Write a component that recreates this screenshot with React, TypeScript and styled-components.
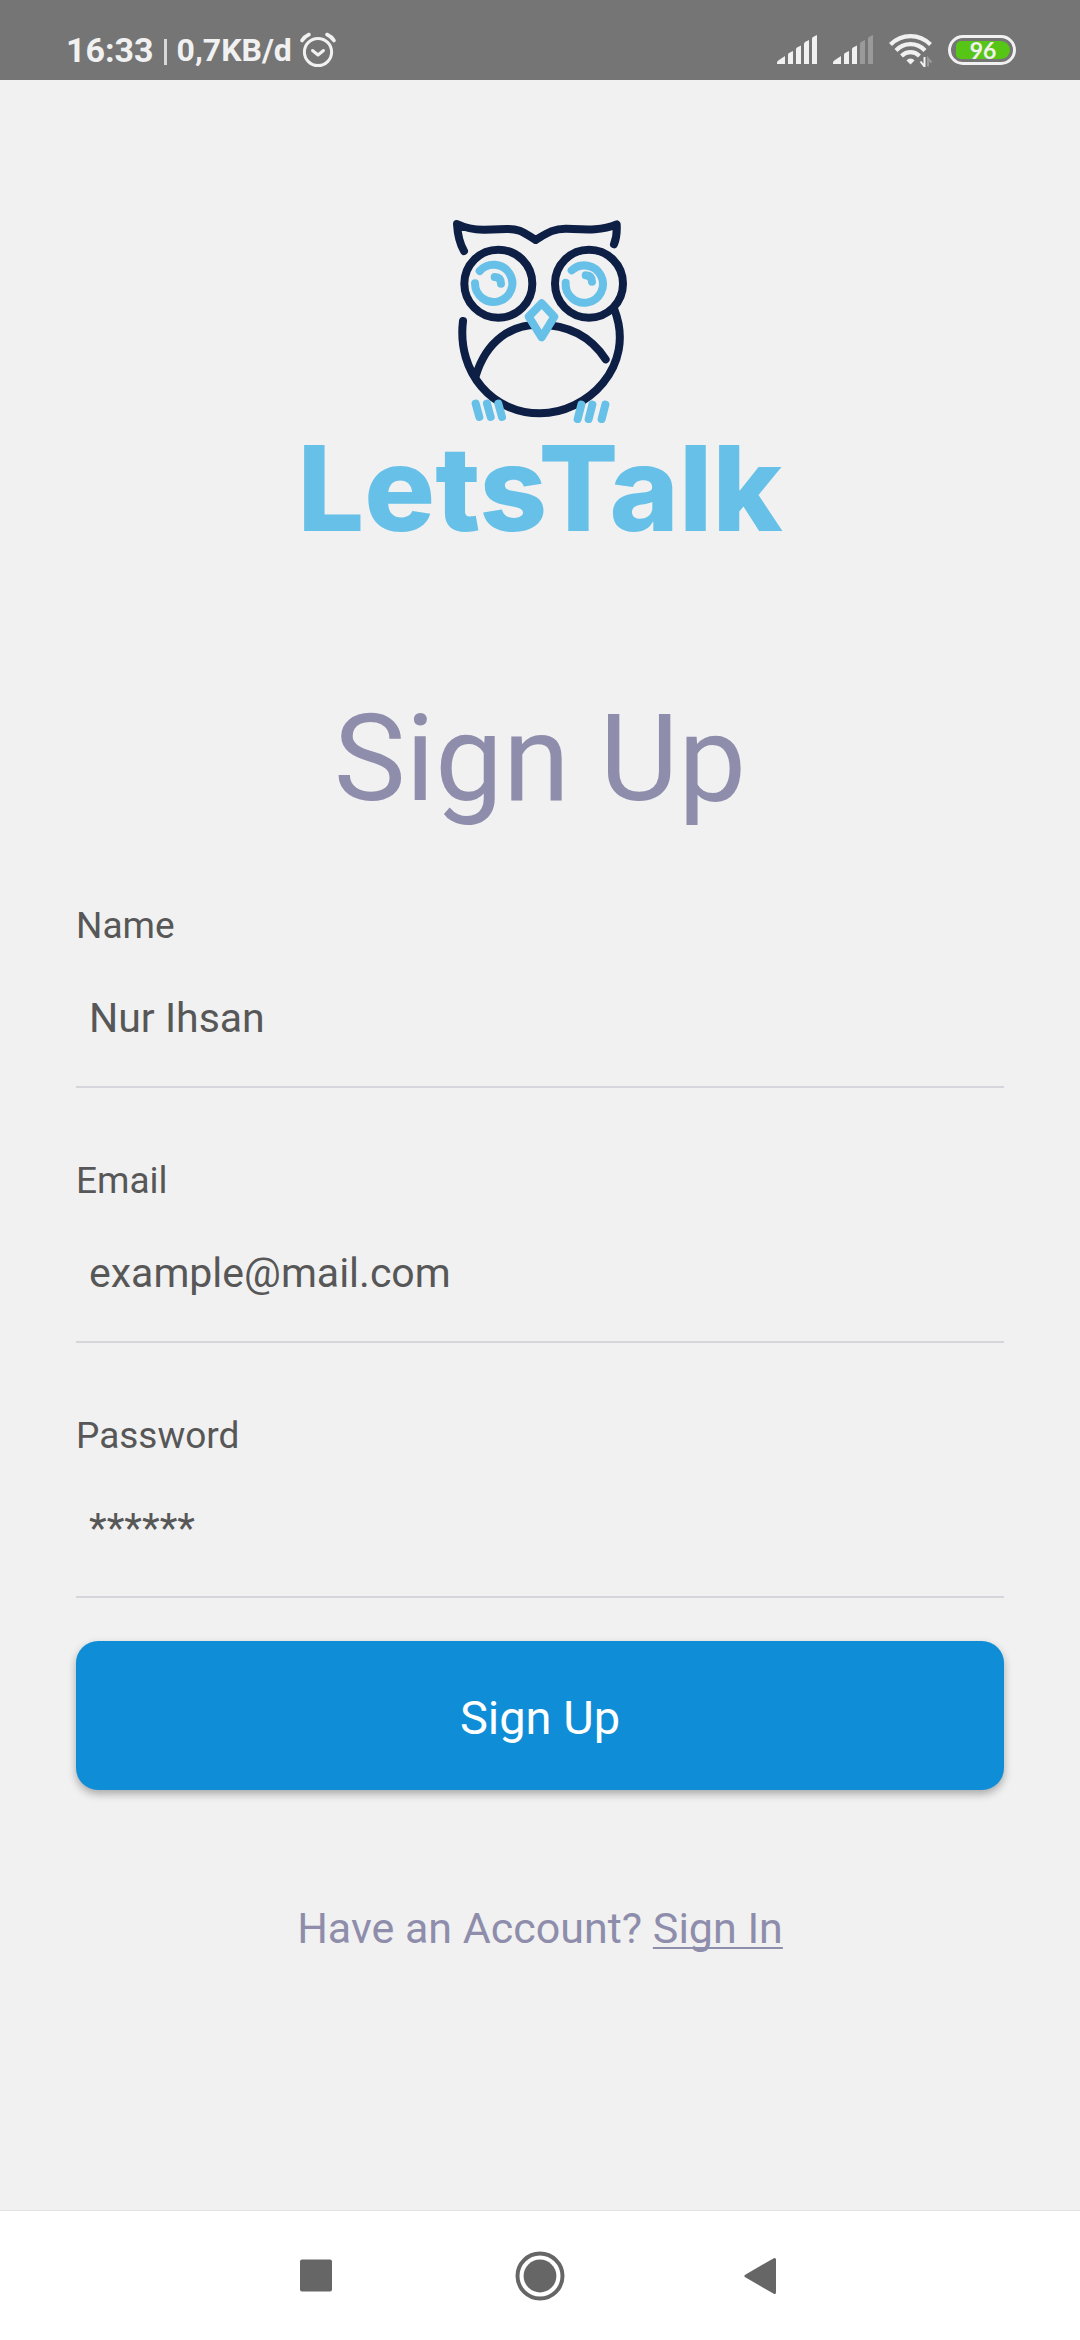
import React from "react";
import styled, { createGlobalStyle } from "styled-components";

const GlobalStyle = createGlobalStyle`
  *, *::before, *::after { box-sizing: border-box; }
  body {
    margin: 0;
    background: #f1f1f1;
    font-family: Roboto, "Noto Sans", sans-serif;
  }
`;

const Screen = styled.div`
  display: flex;
  flex-direction: column;
  min-height: 100vh;
`;

const StatusBar = styled.header`
  display: flex;
  align-items: center;
  justify-content: space-between;
  height: 80px;
  padding: 20px 64px 0 66px;
  background: #757575;
  color: #f1f1f1;
`;

const StatusGroup = styled.div<{ $gap: number }>`
  display: flex;
  align-items: center;
  gap: ${(p) => p.$gap}px;

  svg { display: block; }
`;

const StatusText = styled.span<{ $size: number }>`
  font-size: ${(p) => p.$size}px;
  line-height: 40px;
  font-weight: 700;
`;

const StatusDivider = styled.span`
  width: 3px;
  height: 26px;
  margin-top: 4px;
  background: #d8d8d8;
`;

const Battery = styled.div`
  display: flex;
  width: 68px;
  height: 30px;
  padding: 3px;
  border: 3px solid #f1f1f1;
  border-radius: 15px;
`;

const BatteryLevel = styled.div`
  display: flex;
  flex: 1;
  align-items: center;
  justify-content: center;
  margin: 0 0 0 2px;
  border-radius: 5px 9px 9px 5px;
  background: #57c516;
  font-family: Lato, sans-serif;
  font-size: 23px;
  font-weight: 700;
  line-height: 18px;
`;

const Content = styled.main`
  display: flex;
  flex: 1;
  flex-direction: column;
  padding: 120px 76px 0;
`;

const Logo = styled.div`
  display: flex;
  flex-direction: column;
  align-items: center;
  gap: 6px;

  svg { display: block; }
`;

const Wordmark = styled.span`
  color: #67c0e8;
  font-family: Inter, sans-serif;
  font-size: 118px;
  font-weight: 800;
  line-height: 112px;
`;

const Title = styled.h1`
  margin: 144px 0 75px;
  color: #8e8dab;
  font-size: 121px;
  font-weight: 400;
  line-height: 142px;
  text-align: center;
`;

const Form = styled.form`
  display: flex;
  flex-direction: column;
`;

const Fields = styled.div`
  display: flex;
  flex-direction: column;
  gap: 72px;
`;

const Field = styled.div`
  display: flex;
  flex-direction: column;
  gap: 4px;
`;

const Label = styled.label`
  color: #575757;
  font-size: 37px;
  line-height: 42px;
`;

const Input = styled.input`
  width: 100%;
  height: 137px;
  padding: 0 13px 2px;
  border: 0;
  border-bottom: 2px solid #d6d5dc;
  border-radius: 0;
  outline: 0;
  background: transparent;
  color: #575757;
  font: inherit;
  font-size: 41px;

  &::placeholder {
    color: #575757;
    opacity: 1;
  }
`;

const SubmitButton = styled.button`
  height: 149px;
  margin-top: 43px;
  padding: 4px 0 0;
  border: 0;
  border-radius: 22px;
  background: #0f8ed7;
  box-shadow: 0 4px 8px rgba(0, 0, 0, 0.3);
  color: #fff;
  font: inherit;
  font-size: 47px;
`;

const SignInPrompt = styled.p`
  margin: 113px 0 0;
  color: #8e8dab;
  font-size: 43px;
  line-height: 50px;
  text-align: center;
`;

const SignInLink = styled.a`
  color: inherit;
  text-decoration: underline;
  text-decoration-thickness: 2px;
  text-underline-offset: 4px;
  text-decoration-skip-ink: none;
`;

const NavBar = styled.nav`
  display: flex;
  justify-content: center;
  height: 130px;
  border-top: 1px solid #e2e2e2;
  background: #fff;
`;

const NavButton = styled.button`
  display: flex;
  align-items: center;
  justify-content: center;
  width: 222px;
  padding: 0;
  border: 0;
  background: transparent;
  color: #666;
`;

const AlarmIcon = () => (
  <svg width="36" height="36" viewBox="2 0 36 36" fill="none" stroke="currentColor" strokeWidth="3" strokeLinecap="round" overflow="visible" aria-hidden="true">
    <circle cx="18" cy="20" r="13.6" />
    <path d="M12.500 18.500 18 23l5.500-4.500" strokeLinejoin="round" />
    <path d="M2 8.500Q4.500 4.500 9 2.500M34 8.500Q31.500 4.500 27 2.500" strokeWidth="3.600" />
  </svg>
);

const SignalIcon = ({ level }: { level: number }) => {
  const bars = [
    "M0 29V27.500Q0 26 2 25L8 21V29Z",
    "M11 29V19.500Q11 18.500 12 18L16 16V29Z",
    "M19 29V14Q19 13 20 12.500L24 10.500V29Z",
    "M27 29V9Q27 8 28 7L32 5V29Z",
    "M35 29V4Q35 2.500 36 2L40 0V29Z",
  ];
  return (
    <svg width="40" height="30" viewBox="0 0 40 30" fill="currentColor" aria-hidden="true">
      {bars.map((d, i) => (
        <path key={d} d={d} opacity={i < level ? 1 : 0.3} />
      ))}
    </svg>
  );
};

const WifiIcon = () => (
  <svg width="43" height="34" viewBox="0 0 43 34" fill="none" stroke="currentColor" strokeWidth="4.200" aria-hidden="true">
    <path d="M1.500 11.500Q10 3.100 21.500 3.100T41.500 11.500" />
    <path d="M7 17.500Q13 11.200 21.500 11.200T36 17.500" />
    <path d="M12.500 23Q16.500 19.200 21.500 19.200T30.500 23" />
    <path d="M21.500 31.500 17.500 27.500Q19 25.500 21.500 25.500T25.500 27.500Z" fill="currentColor" stroke="none" />
    <path d="M35.500 24V33.500L31.500 28.500" strokeWidth="2" />
    <path d="M39 33.500V25.500L42.500 29.500" strokeWidth="2" opacity="0.300" />
  </svg>
);

const NAVY = "#0d1f44";
const SKY = "#67c0e8";

const OwlIcon = () => (
  <svg width="220" height="226" viewBox="0 0 660 678" fill="none" strokeWidth="24" strokeLinecap="round" strokeLinejoin="round" aria-hidden="true">
    <g stroke={NAVY}>
      <path d="M102 153Q84 122 81 72Q118 90 165 89L230 87C270 85 286 102 317 120C350 100 370 85 410 86C460 88 510 94 560 73Q562 108 552 133" />
      <circle cx="205" cy="251" r="102" />
      <circle cx="477" cy="251" r="102" />
      <path d="M99 363C80 520 190 640 330 640S620 500 553 328" />
      <path d="M137 528C170 420 245 374 325 374C410 374 480 405 527 478" />
    </g>
    <g stroke={SKY}>
      <path d="M135 250A56 56 0 1 0 149 213" />
      <path d="M407 248A56 56 0 1 0 425 211" />
      <path d="M194 231Q213 232 213 251M467 226Q486 227 486 245" />
      <path d="M335 310 373 350 335 412 296 350Z" fill="#f1f1f1" />
      <path d="M137 611 148 651M171 611 182 651M205 611 216 651M454 614 443 657M487 614 476 657M526 614 515 657" />
    </g>
  </svg>
);

const SquareIcon = () => (
  <svg width="50" height="50" viewBox="0 0 50 50" fill="currentColor" aria-hidden="true">
    <rect x="7" y="8.500" width="32" height="32" rx="2" />
  </svg>
);

const CircleIcon = () => (
  <svg width="50" height="50" viewBox="0 0 50 50" aria-hidden="true">
    <circle cx="25" cy="25" r="22.500" fill="none" stroke="currentColor" strokeWidth="4" />
    <circle cx="25" cy="25" r="16.400" fill="currentColor" />
  </svg>
);

const TriangleIcon = () => (
  <svg width="50" height="50" viewBox="0 0 50 50" fill="currentColor" stroke="currentColor" strokeWidth="3" strokeLinejoin="round" aria-hidden="true">
    <path d="M9 25 37.500 8.500V41.500Z" />
  </svg>
);

const fields = [
  { id: "name", label: "Name", type: "text", placeholder: "Nur Ihsan" },
  { id: "email", label: "Email", type: "email", placeholder: "example@mail.com" },
  { id: "password", label: "Password", type: "password", placeholder: "******" },
];

export default function App() {
  return (
    <>
      <GlobalStyle />
      <Screen>
        <StatusBar>
          <StatusGroup $gap={10}>
            <StatusText $size={34}>16:33</StatusText>
            <StatusDivider />
            <StatusText $size={32}>0,7KB/d</StatusText>
            <AlarmIcon />
          </StatusGroup>
          <StatusGroup $gap={16}>
            <SignalIcon level={5} />
            <SignalIcon level={3} />
            <WifiIcon />
            <Battery>
              <BatteryLevel>96</BatteryLevel>
            </Battery>
          </StatusGroup>
        </StatusBar>
        <Content>
          <Logo>
            <OwlIcon />
            <Wordmark>LetsTalk</Wordmark>
          </Logo>
          <Title>Sign Up</Title>
          <Form onSubmit={(e) => e.preventDefault()}>
            <Fields>
              {fields.map((f) => (
                <Field key={f.id}>
                  <Label htmlFor={f.id}>{f.label}</Label>
                  <Input id={f.id} type={f.type} placeholder={f.placeholder} />
                </Field>
              ))}
            </Fields>
            <SubmitButton type="submit">Sign Up</SubmitButton>
          </Form>
          <SignInPrompt>
            Have an Account? <SignInLink href="#sign-in">Sign In</SignInLink>
          </SignInPrompt>
        </Content>
        <NavBar>
          <NavButton type="button" aria-label="Recent apps"><SquareIcon /></NavButton>
          <NavButton type="button" aria-label="Home"><CircleIcon /></NavButton>
          <NavButton type="button" aria-label="Back"><TriangleIcon /></NavButton>
        </NavBar>
      </Screen>
    </>
  );
}
